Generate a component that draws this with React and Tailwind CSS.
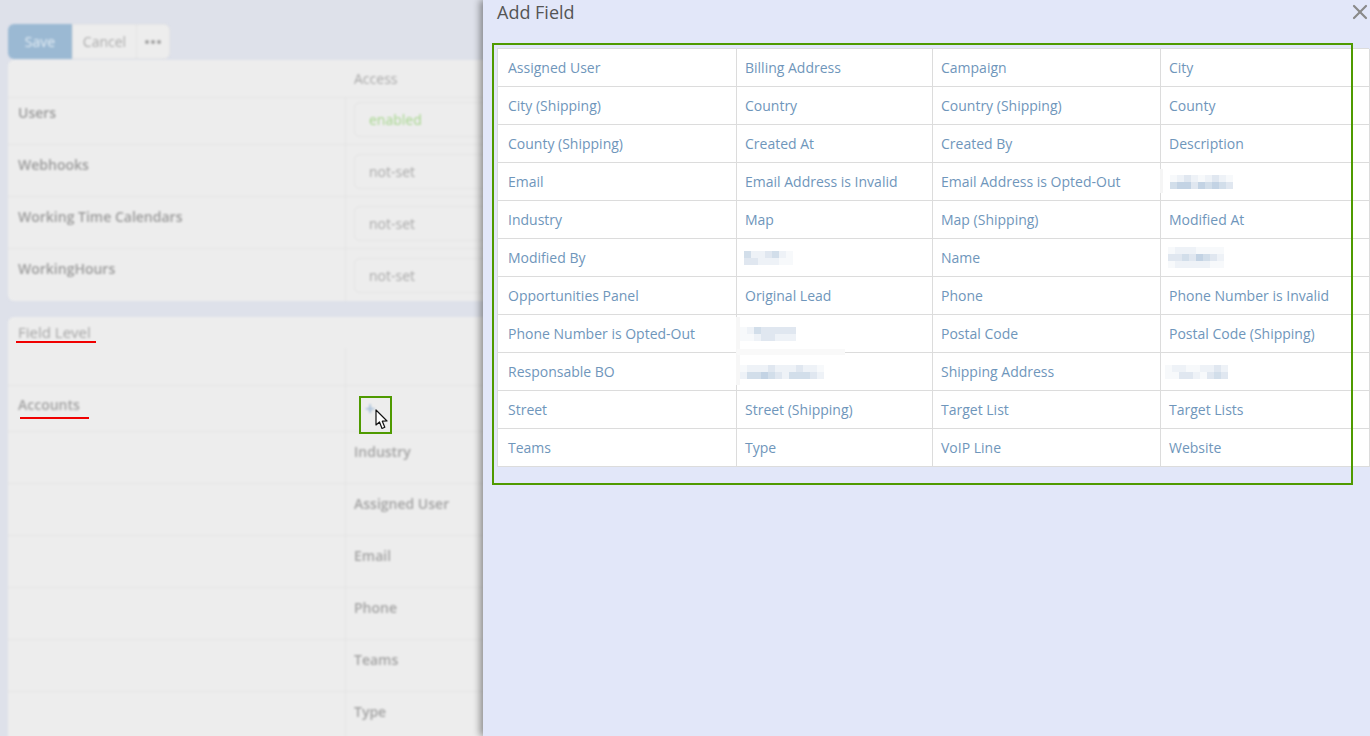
import { X } from 'lucide-react';

const fields = [
  ['Assigned User', 'Billing Address', 'Campaign', 'City'],
  ['City (Shipping)', 'Country', 'Country (Shipping)', 'County'],
  ['County (Shipping)', 'Created At', 'Created By', 'Description'],
  ['Email', 'Email Address is Invalid', 'Email Address is Opted-Out', { cols: 9, ml: 'ml-[1px]', rows: ['012101210', '344243432'] }],
  ['Industry', 'Map', 'Map (Shipping)', 'Modified At'],
  ['Modified By', { cols: 7, ml: 'ml-[-1px]', rows: ['3112310', '2211100'] }, 'Name', { cols: 8, ml: 'ml-[-1px]', rows: ['01110000', '22324321', '01111100'] }],
  ['Opportunities Panel', 'Original Lead', 'Phone', 'Phone Number is Invalid'],
  ['Phone Number is Opted-Out', { cols: 8, ml: 'ml-[-5px]', rows: ['01322222', '00122111'] }, 'Postal Code', 'Postal Code (Shipping)'],
  ['Responsable BO', { cols: 12, ml: 'ml-[-5px]', rows: ['011121112110', '133432133321'] }, 'Shipping Address', { cols: 9, ml: 'ml-[-4px]', rows: ['011001121', '002210232'] }],
  ['Street', 'Street (Shipping)', 'Target List', 'Target Lists'],
  ['Teams', 'Type', 'VoIP Line', 'Website'],
];

const shades = ['#f7f9fb', '#eef2f7', '#e0e7f0', '#d2deea', '#c3d3e4'];

function Redacted({ cols, rows, ml }) {
  const cells = rows.join('').split('');
  return (
    <div className={`grid ${ml}`} style={{ gridTemplateColumns: `repeat(${cols}, 7px)` }}>
      {cells.map((c, i) => (
        <span key={i} className="h-[7px]" style={{ background: shades[Number(c)] }} />
      ))}
    </div>
  );
}

function AccessRow({ label, value, first, last }) {
  return (
    <div className={`grid grid-cols-[337px_1fr] ${first ? 'h-[47px]' : 'h-[52px]'} ${last ? '' : 'border-b border-[#e4e4e4]'}`}>
      <div className={`px-2.5 font-semibold text-[#9b9b9b] ${first ? 'pt-[5px]' : 'pt-2.5'}`}>{label}</div>
      <div className={`border-l border-[#e4e4e4] pl-2 ${first ? 'pt-1' : 'pt-[9px]'}`}>
        <div className={`h-[35px] rounded-md border border-[#e4e4e4] px-3.5 leading-[33px] ${first ? 'text-[#a5d68c]' : 'text-[#a9a9a9]'}`}>
          {value}
        </div>
      </div>
    </div>
  );
}

function FieldRow({ label }) {
  return (
    <div className="grid grid-cols-[337px_1fr] h-[52px] border-b border-[#e4e4e4]">
      <div />
      <div className="border-l border-[#e4e4e4] pl-2 pt-2.5 font-semibold text-[#a3a3a3]">{label}</div>
    </div>
  );
}

export default function App() {
  return (
    <div className="relative h-[736px] overflow-hidden bg-[#dee1ea] font-['Open_Sans',sans-serif] text-sm">
      {/* page behind the modal */}
      <div className="blur-[1px]">
        <div className="flex pl-2 pt-6">
          <div className="flex h-[35px] text-sm">
            <div className="w-16 rounded-l-md bg-[#9bb9d3] text-center leading-[35px] text-[#e3edf5]">Save</div>
            <div className="w-16 border-y border-l border-[#e4e4e4] bg-[#ededed] text-center leading-[33px] text-[#acacac]">Cancel</div>
            <div className="flex w-[34px] items-center justify-center gap-[2px] rounded-r-md border border-[#e4e4e4] bg-[#ededed]">
              <span className="h-1 w-1 rounded-full bg-[#a0a0a0]" />
              <span className="h-1 w-1 rounded-full bg-[#a0a0a0]" />
              <span className="h-1 w-1 rounded-full bg-[#a0a0a0]" />
            </div>
          </div>
        </div>

        <div className="ml-2 mt-px h-[241px] rounded-md bg-[#ededed]">
          <div className="grid h-[38px] grid-cols-[337px_1fr] border-b border-[#e4e4e4]">
            <div />
            <div className="pl-[9px] pt-[9px] text-[#a9a9a9]">Access</div>
          </div>
          <AccessRow label="Users" value="enabled" first />
          <AccessRow label="Webhooks" value="not-set" />
          <AccessRow label="Working Time Calendars" value="not-set" />
          <AccessRow label="WorkingHours" value="not-set" last />
        </div>

        <div className="ml-2 mt-4 rounded-md bg-[#ededed]">
          <div className="h-[31px] px-2.5 pt-[5px] text-[15px] text-[#a6a6a6]">Field Level</div>
          <div className="grid h-[38px] grid-cols-[337px_1fr] border-b border-[#e4e4e4]">
            <div />
            <div className="border-l border-[#e4e4e4]" />
          </div>
          <div className="grid h-[46px] grid-cols-[337px_1fr] border-b border-[#e4e4e4]">
            <div className="px-2.5 pt-[9px] font-semibold text-[#a3a3a3]">Accounts</div>
            <div className="border-l border-[#e4e4e4] pl-[19px] pt-2.5 text-lg font-semibold leading-6 text-[#a3bdd8]">+</div>
          </div>
          <FieldRow label="Industry" />
          <FieldRow label="Assigned User" />
          <FieldRow label="Email" />
          <FieldRow label="Phone" />
          <FieldRow label="Teams" />
          <FieldRow label="Type" />
        </div>
      </div>

      {/* annotations on the page */}
      <div className="absolute left-4 top-[341px] h-0.5 w-20 bg-[#f00000]" />
      <div className="absolute left-5 top-[417px] h-0.5 w-[69px] bg-[#f00000]" />
      <div className="absolute left-[359px] top-[396px] h-[38px] w-[33px] border-2 border-[#4f9a00]" />
      <svg className="absolute left-[375px] top-[409px]" width="14" height="21" viewBox="0 0 14 21">
        <path d="M1 1 L1 16 L4.5 13 L7 19.5 L9.8 18.3 L7.3 12.2 L12 12 Z" fill="#fff" stroke="#111" strokeWidth="1.2" strokeLinejoin="round" />
      </svg>

      {/* Add Field modal */}
      <div className="absolute bottom-0 left-[483px] right-0 top-0 bg-[#e2e7f9] shadow-[-3px_0_7px_rgba(0,0,0,0.4)]">
        <div className="flex h-[48px] items-start justify-between pl-3.5">
          <div className="text-lg leading-6 text-[#555]">Add Field</div>
          <X size={24} strokeWidth={2.2} className="mr-[-2px] text-[#8a8a8a]" />
        </div>
        <div className="ml-3.5 w-[872px] border-l border-t border-[#dcdcdc] bg-white grid grid-cols-[239px_196px_228px_209px]">
          {fields.flat().map((f, i) => (
            <div key={i} className={`flex h-[38px] items-center whitespace-nowrap border-b border-r border-[#dcdcdc] text-[#6f96bb] ${i % 4 === 0 ? 'pl-2.5' : 'pl-2'}`}>
              {typeof f === 'string' ? f : <Redacted {...f} />}
            </div>
          ))}
        </div>
      </div>

      {/* smudges left by the redaction */}
      <div className="absolute left-[736px] top-[317px] h-[68px] w-1 bg-[#f7f7f7]" />
      <div className="absolute left-[737px] top-[349px] h-1.5 w-[108px] bg-[#f9f9f9]" />
      <div className="absolute left-[1160px] top-[169px] h-6 w-[3px] bg-[#f5f5f5]" />

      {/* annotation on the modal */}
      <div className="pointer-events-none absolute left-[492px] top-[43px] h-[442px] w-[861px] border-2 border-[#4f9a00]" />
    </div>
  );
}
